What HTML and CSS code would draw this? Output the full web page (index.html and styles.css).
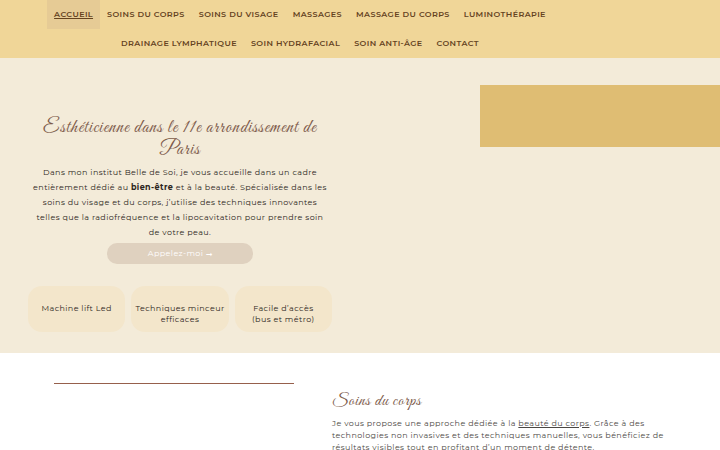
FILE: index.html
```html
<!DOCTYPE html>
<html lang="fr">
<head>
    <meta charset="UTF-8">
    <meta name="viewport" content="width=device-width, initial-scale=1.0">
    <title>Belle de Soi</title>
    <link rel="stylesheet" href="styles.css">
</head>
<body>

<header class="site-header">
    <nav class="menu">
        <a class="active" href="#">Accueil</a>
        <a href="#">Soins du corps</a>
        <a href="#">Soins du visage</a>
        <a href="#">Massages</a>
        <a href="#">Massage du corps</a>
        <a href="#">Luminothérapie</a>
        <a href="#">Drainage lymphatique</a>
        <a href="#">Soin Hydrafacial</a>
        <a href="#">Soin anti-âge</a>
        <a href="#">Contact</a>
    </nav>
</header>

<main>
    <section class="hero">
        <div class="hero-text">
            <h1>Esthéticienne dans le 11e arrondissement de<br>Paris</h1>
            <p>Dans mon institut Belle de Soi, je vous accueille dans un cadre<br>
            entièrement dédié au <strong>bien-être</strong> et à la beauté. Spécialisée dans les<br>
            soins du visage et du corps, j’utilise des techniques innovantes<br>
            telles que la radiofréquence et la lipocavitation pour prendre soin<br>
            de votre peau.</p>
            <button class="call-button" type="button">Appelez-moi ⭢</button>
            <div class="cards">
                <div class="card">Machine lift Led</div>
                <div class="card">Techniques minceur efficaces</div>
                <div class="card">Facile d’accès<br>(bus et métro)</div>
            </div>
        </div>
        <div class="hero-band"></div>
    </section>

    <section class="care">
        <div class="care-line"></div>
        <div class="care-text">
            <h2>Soins du corps</h2>
            <p>Je vous propose une approche dédiée à la <a href="#">beauté du corps</a>. Grâce à des<br>
            technologies non invasives et des techniques manuelles, vous bénéficiez de<br>
            résultats visibles tout en profitant d’un moment de détente.</p>
        </div>
    </section>
</main>

</body>
</html>
```
FILE: styles.css
```css
* {
    box-sizing: border-box;
}

body {
    margin: 0;
    font-family: Montserrat, Inter, sans-serif;
    font-size: 8px;
    letter-spacing: 0.05em;
    color: #2b2520;
    background-color: #fff;
}

h1, h2 {
    margin: 0;
    font-family: "Great Vibes", Parisienne, "Liberation Serif", serif;
    font-size: 19px;
    font-weight: normal;
    letter-spacing: 0.05em;
    line-height: 22px;
    color: #7d5a4a;
}

h2 {
    font-size: 17px;
}

p {
    margin: 0;
    white-space: nowrap;
}

/* Menu */
.site-header {
    background-color: #f0d698;
    padding-right: 120px;
}

.menu {
    display: flex;
    flex-wrap: wrap;
    justify-content: center;
}

.menu a {
    padding: 0 7px;
    line-height: 29px;
    font-weight: 600;
    text-transform: uppercase;
    text-decoration: none;
    color: #65431f;
}

.menu a.active {
    background-color: #e6cb95;
    text-decoration: underline;
}

/* Hero */
.hero {
    display: grid;
    grid-template-columns: 1fr 1fr;
    background-color: #f3ebd9;
}

.hero-text {
    padding: 59px 28px 21px;
    text-align: center;
}

.hero-text p {
    margin: 4px 0 3px;
    line-height: 15px;
}

.call-button {
    display: block;
    width: 48%;
    height: 21px;
    margin: 0 auto 22px;
    padding: 0;
    border: none;
    border-radius: 10px;
    background-color: #dfd1bf;
    font: inherit;
    letter-spacing: inherit;
    color: #fff;
}

.cards {
    display: grid;
    grid-template-columns: repeat(3, 1fr);
    gap: 6px;
}

.card {
    min-height: 46px;
    padding-top: 17px;
    border-radius: 14px;
    background-color: #f3e6cb;
    line-height: 11px;
}

.hero-band {
    width: 240px;
    height: 62px;
    margin-top: 27px;
    justify-self: end;
    background-color: #dfbd73;
}

/* Soins */
.care {
    display: flex;
    gap: 38px;
    padding: 30px 54px 0;
}

.care-line {
    flex: none;
    width: 240px;
    height: 1px;
    background-color: #96604c;
}

.care-text {
    padding-top: 8px;
}

.care-text p {
    margin-top: 4px;
    line-height: 12px;
    color: #4b4743;
}

.care-text a {
    color: inherit;
}
```
